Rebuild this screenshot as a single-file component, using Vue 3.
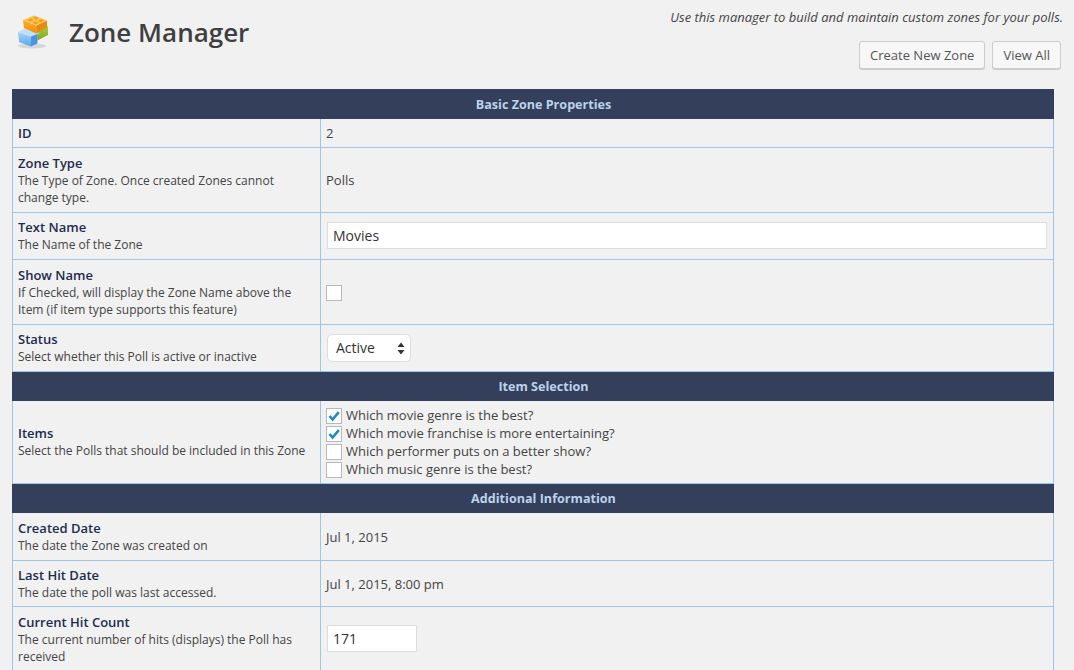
<template>
	<div class="page">
		<header class="top">
			<div class="heading">
				<svg class="logo" width="36" height="36" viewBox="0 0 36 36">
					<defs>
						<linearGradient id="blue-front" x1="0" y1="0" x2="0" y2="1">
							<stop offset="0" stop-color="#a6d4f8" />
							<stop offset="1" stop-color="#5aa6ea" />
						</linearGradient>
						<linearGradient id="orange-front" x1="0" y1="0" x2="0" y2="1">
							<stop offset="0" stop-color="#fbb02c" />
							<stop offset="1" stop-color="#ee8c0c" />
						</linearGradient>
						<linearGradient id="green-front" x1="0" y1="0" x2="0" y2="1">
							<stop offset="0" stop-color="#a9cf45" />
							<stop offset="1" stop-color="#7aa822" />
						</linearGradient>
					</defs>
					<ellipse cx="16" cy="32" rx="14" ry="2.4" fill="#d6d6d6" />
					<path d="M21 16 L32 12 L32 21 L21.5 26.5 Z" fill="url(#green-front)" />
					<path d="M2 18 L9 14.5 L24 19 L15 22.5 Z" fill="#bfe0fa" />
					<path d="M2 18 L15 22.5 L15 32.5 L3 28 Z" fill="url(#blue-front)" />
					<path d="M15 22.5 L21.5 20 L21.5 29.5 L15 32.5 Z" fill="#4b95de" />
					<path d="M7 6 L20 11.5 L20.5 19.5 L8 14 Z" fill="url(#orange-front)" />
					<path d="M20 11.5 L31 6.5 L31 13 L20.5 19.5 Z" fill="#e88a0e" />
					<path d="M7 6 L18 1.5 L31 6.5 L20 11.5 Z" fill="#fcc24f" />
					<path d="M11.5 6 L15 4.4 L18 6 L14.5 7.6 Z M17 3.8 L20 2.6 L23 4.2 L20 5.6 Z M16.5 8.8 L20 7.2 L23 8.8 L19.5 10.2 Z M22 6.6 L25.5 5.2 L28 6.6 L24.5 8 Z" fill="#f09c1c" />
				</svg>
				<h1>Zone Manager</h1>
			</div>
			<div class="intro">
				<p>Use this manager to build and maintain custom zones for your polls.</p>
				<div class="actions">
					<button type="button">Create New Zone</button>
					<button type="button">View All</button>
				</div>
			</div>
		</header>

		<table class="form">
			<colgroup>
				<col class="col-label" />
				<col />
			</colgroup>
			<tbody>
				<tr class="band"><th colspan="2">Basic Zone Properties</th></tr>
				<tr class="row-id">
					<td><strong>ID</strong></td>
					<td class="value">2</td>
				</tr>
				<tr class="row-type">
					<td><strong>Zone Type</strong><br />The Type of Zone. Once created Zones cannot change type.</td>
					<td class="value">Polls</td>
				</tr>
				<tr class="row-name">
					<td><strong>Text Name</strong><br />The Name of the Zone</td>
					<td class="field"><input class="text-name" type="text" value="Movies" /></td>
				</tr>
				<tr class="row-show">
					<td><strong>Show Name</strong><br />If Checked, will display the Zone Name above the Item (if item type supports this feature)</td>
					<td class="field"><span class="check"></span></td>
				</tr>
				<tr class="row-status">
					<td><strong>Status</strong><br />Select whether this Poll is active or inactive</td>
					<td class="field">
						<span class="select">
							Active
							<svg width="8" height="13" viewBox="0 0 8 13">
								<path d="M4 0.5 L7.5 5 L0.5 5 Z M4 12.5 L0.5 8 L7.5 8 Z" fill="#333" />
							</svg>
						</span>
					</td>
				</tr>
				<tr class="band"><th colspan="2">Item Selection</th></tr>
				<tr class="row-items">
					<td><strong>Items</strong><br />Select the Polls that should be included in this Zone</td>
					<td class="field items">
						<label v-for="poll of polls" :key="poll.text">
							<span class="check">
								<svg v-if="poll.checked" width="14" height="14" viewBox="0 0 14 14">
									<path d="M2.5 7 L5.6 10.6 L11.8 3.2" fill="none" stroke="#1e8cbe" stroke-width="2.6" />
								</svg>
							</span>{{poll.text}}
						</label>
					</td>
				</tr>
				<tr class="band"><th colspan="2">Additional Information</th></tr>
				<tr class="row-created">
					<td><strong>Created Date</strong><br />The date the Zone was created on</td>
					<td class="value">Jul 1, 2015</td>
				</tr>
				<tr class="row-hit">
					<td><strong>Last Hit Date</strong><br />The date the poll was last accessed.</td>
					<td class="value">Jul 1, 2015, 8:00 pm</td>
				</tr>
				<tr class="row-count">
					<td><strong>Current Hit Count</strong><br />The current number of hits (displays) the Poll has received</td>
					<td class="field"><input class="hit-count" type="text" value="171" /></td>
				</tr>
			</tbody>
		</table>
	</div>
</template>

<style>
	html, body
	{
		margin: 0;
		background: #f1f1f1;
		overflow: hidden;
	}
</style>

<style scoped>
	.page
	{
		height: 670px;
		overflow: hidden;
		box-sizing: border-box;
		padding: 0 20px 0 12px;
		font-family: "Open Sans", sans-serif;
		font-size: 12px;
		line-height: 18px;
		color: #444;
	}

	.top
	{
		display: flex;
		justify-content: space-between;
		height: 89px;
		margin-right: -9px;
	}

	.heading
	{
		display: flex;
		align-items: flex-start;
		padding-top: 14px;
	}

	.logo
	{
		margin: 0 0 0 4px;
	}

	h1
	{
		margin: 0 0 0 17px;
		font-size: 26px;
		line-height: 36px;
		font-weight: 600;
		color: #3f3f3f;
	}

	.intro
	{
		text-align: right;
		padding-top: 8px;
	}

	.intro p
	{
		margin: 0;
		font-style: italic;
		font-size: 13px;
		color: #444;
	}

	.actions
	{
		display: flex;
		justify-content: flex-end;
		gap: 7px;
		margin-top: 15px;
		padding-right: 2px;
	}

	button
	{
		height: 28px;
		padding: 0 10px;
		border: 1px solid #ccc;
		border-radius: 3px;
		background: #f7f7f7;
		box-shadow: 0 1px 0 #ccc;
		font: 13px/26px "Open Sans", sans-serif;
		color: #555;
	}

	.form
	{
		width: 100%;
		table-layout: fixed;
		border-collapse: collapse;
	}

	.col-label
	{
		width: 308px;
	}

	th
	{
		height: 29px;
		padding: 1px 0 0 21px;
		box-sizing: border-box;
		border: 1px solid #343f5c;
		background: #343f5c;
		color: #bcd2ea;
		font-size: 12.6px;
		font-weight: 700;
		text-align: center;
	}

	td
	{
		padding: 0 5px;
		border: 1px solid #9cc6e6;
		vertical-align: middle;
		color: #444;
	}

	td:first-child
	{
		line-height: 17px;
	}

	strong
	{
		font-weight: 600;
		font-size: 13px;
		line-height: 1;
		color: #1d2c4d;
	}

	.value
	{
		font-size: 13px;
	}

	.row-id td { height: 28px; }
	.row-type td { height: 64px; }
	.row-name td { height: 46px; }
	.row-show td { height: 64px; }
	.row-status td { height: 46px; }
	.row-items td { height: 82px; }
	.row-created td { height: 47px; }
	.row-hit td { height: 45px; }
	.row-count td { height: 64px; }

	input
	{
		box-sizing: border-box;
		display: block;
		margin: -1px 0 0 1px;
		padding: 0 5px;
		height: 27px;
		border: 1px solid #ddd;
		background: #fff;
		font: 14px "Open Sans", sans-serif;
		color: #333;
	}

	.text-name
	{
		width: 720px;
	}

	.hit-count
	{
		width: 90px;
	}

	.check
	{
		box-sizing: border-box;
		display: inline-flex;
		align-items: center;
		justify-content: center;
		width: 16px;
		height: 16px;
		border: 1px solid #b4b9be;
		background: #fff;
		vertical-align: middle;
	}

	.select
	{
		box-sizing: border-box;
		display: flex;
		align-items: center;
		justify-content: space-between;
		width: 84px;
		height: 28px;
		margin-left: 1px;
		padding: 0 5px 0 8px;
		border: 1px solid #ddd;
		border-radius: 5px;
		background: #fff;
		font-size: 14px;
		color: #333;
	}

	.items label
	{
		display: block;
		font-size: 13px;
		line-height: 18px;
		color: #444;
	}

	.items .check
	{
		margin: -2px 4px 0 0;
	}
</style>

<script setup>
	const polls = [
		{ text: "Which movie genre is the best?", checked: true },
		{ text: "Which movie franchise is more entertaining?", checked: true },
		{ text: "Which performer puts on a better show?", checked: false },
		{ text: "Which music genre is the best?", checked: false },
	];
</script>
